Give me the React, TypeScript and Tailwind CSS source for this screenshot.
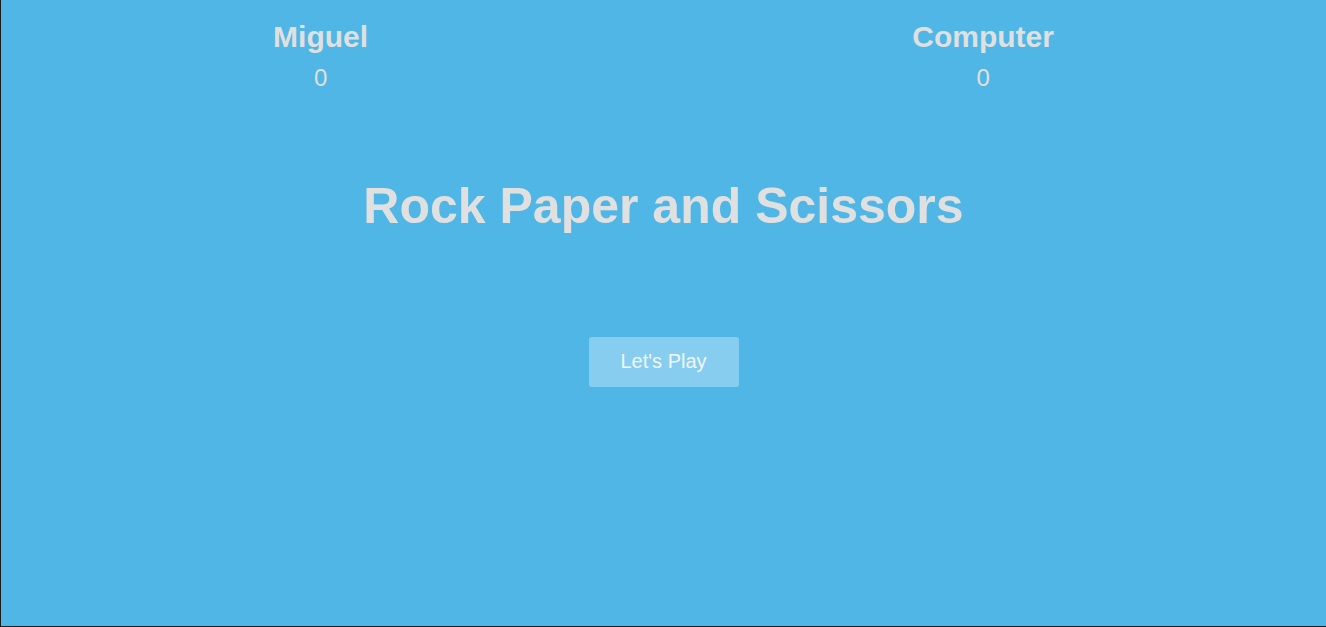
import React, { useState } from "react";

export default function App() {
    const [scores] = useState({ player: 0, computer: 0 });

    return (
        <div
            className="h-[627px] w-full overflow-hidden bg-[#4fb6e6] border-l border-b border-[#1c1c1c] text-[#e0e0e0]"
            style={{ fontFamily: '"Liberation Sans", Arial, sans-serif' }}
        >
            {/* Scoreboard */}
            <div className="flex justify-around pt-[22px]">
                <div className="flex flex-col items-center">
                    <h2 className="text-[30px] leading-[30px] font-bold">Miguel</h2>
                    <span className="mt-[14px] text-[24px] leading-[24px]">{scores.player}</span>
                </div>
                <div className="flex flex-col items-center">
                    <h2 className="text-[30px] leading-[30px] font-bold">Computer</h2>
                    <span className="mt-[14px] text-[24px] leading-[24px]">{scores.computer}</span>
                </div>
            </div>

            {/* Title */}
            <h1 className="mt-[91px] text-center text-[50px] leading-[50px] font-bold">
                Rock Paper and Scissors
            </h1>

            {/* Start */}
            <div className="mt-[106px] flex justify-center">
                <button className="w-[150px] h-[50px] pb-[2px] rounded-[3px] bg-[#87cdef] text-[20px] text-[#f2f6fb] hover:bg-[#9ad6f2] transition-colors">
                    Let's Play
                </button>
            </div>
        </div>
    );
}
